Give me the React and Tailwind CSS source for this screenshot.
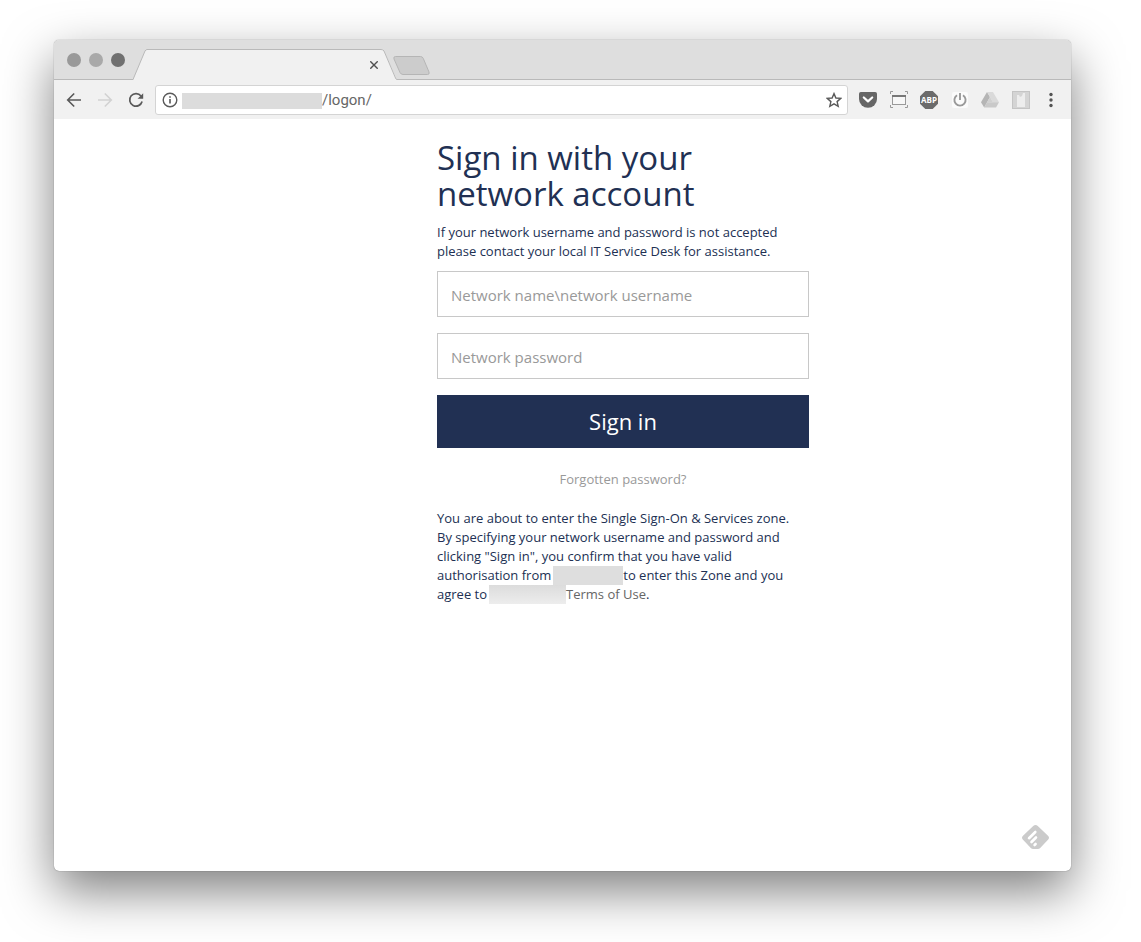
import React from "react";

const toolButton = "flex h-5 w-5 shrink-0 items-center justify-center";

function TabStrip() {
  return (
    <div className="flex h-10 items-end border-b border-[#b9b9b9] bg-[#dedede]">
      <div className="flex gap-2 self-center pl-[13px]">
        <button type="button" aria-label="Close window" className="h-3.5 w-3.5 rounded-full bg-[#999999]" />
        <button type="button" aria-label="Minimise window" className="h-3.5 w-3.5 rounded-full bg-[#a9a9a9]" />
        <button type="button" aria-label="Zoom window" className="h-3.5 w-3.5 rounded-full bg-[#707070]" />
      </div>
      <div className="-mb-px ml-2 flex h-[31px] w-[264px] items-stretch">
        <svg width="14" height="31" viewBox="0 0 14 31" aria-hidden="true" className="shrink-0">
          <path d="M0 31 L12 2 Q13 0 14 0 V31Z" fill="#f1f1f1" />
          <path d="M0 30.5 L12 2 Q13 .5 14 .5" fill="none" stroke="#b9b9b9" />
        </svg>
        <div className="flex flex-1 items-center justify-end border-t border-[#b9b9b9] bg-[#f1f1f1]">
          <button type="button" aria-label="Close tab" className="flex h-4 w-3.5 items-center justify-center">
            <svg width="8" height="8" viewBox="0 0 8 8" aria-hidden="true">
              <path d="M.3 .3 7.7 7.7M7.7 .3 .3 7.7" stroke="#505050" strokeWidth="1.4" />
            </svg>
          </button>
        </div>
        <svg width="16" height="31" viewBox="0 0 16 31" aria-hidden="true" className="shrink-0">
          <path d="M0 0 Q2 0 3 2 L15 29 Q16 31 16 31 H0Z" fill="#f1f1f1" />
          <path d="M0 .5 Q2 .5 3 2 L14.5 29 Q15 30.5 16 30.5" fill="none" stroke="#b9b9b9" />
        </svg>
      </div>
      <button type="button" aria-label="New tab" className="mb-1 -ml-1">
        <svg width="37" height="19" viewBox="0 0 37 19" aria-hidden="true">
          <path d="M2.5 .5 H27.5 Q29.5 .5 30.3 2.5 L36 16 Q36.8 18.5 34.5 18.5 H10 Q8 18.5 7 16.5 L1 3 Q.2 .5 2.5 .5Z" fill="#cccccc" stroke="#b5b5b5" />
        </svg>
      </button>
    </div>
  );
}

function Toolbar() {
  return (
    <div className="flex h-[39px] items-center bg-[#f1f1f1] px-[10px]">
      <div className="flex gap-[11px]">
        <button type="button" aria-label="Back" className={toolButton}>
          <svg width="16" height="16" viewBox="0 0 16 16" fill="none" stroke="#5a5a5a" strokeWidth="1.6" aria-hidden="true">
            <path d="M15 8H2M8.2 1.5 1.7 8l6.5 6.5" />
          </svg>
        </button>
        <button type="button" aria-label="Forward" className={toolButton}>
          <svg width="16" height="16" viewBox="0 0 16 16" fill="none" stroke="#d2d2d2" strokeWidth="1.6" aria-hidden="true">
            <path d="M1 8h13M7.8 1.5 14.3 8l-6.5 6.5" />
          </svg>
        </button>
        <button type="button" aria-label="Reload" className={toolButton}>
          <svg width="16" height="16" viewBox="0 0 16 16" aria-hidden="true">
            <path d="M13 4 A6.3 6.3 0 1 0 14.1 9.5" fill="none" stroke="#5a5a5a" strokeWidth="1.7" />
            <path d="M15.2 1.2 V6.8 H9.6Z" fill="#5a5a5a" />
          </svg>
        </button>
      </div>
      <div className="ml-[9px] flex h-[30px] flex-1 items-center rounded-[3px] border border-[#d4d4d4] bg-white pl-[6px] pr-[3px]">
        <svg width="16" height="16" viewBox="0 0 16 16" className="shrink-0" aria-hidden="true">
          <circle cx="8" cy="8" r="6.8" fill="none" stroke="#5a5a5a" strokeWidth="1.4" />
          <path d="M8 7v4.6M8 4.2v1.6" stroke="#555555" strokeWidth="1.6" />
        </svg>
        <span className="ml-1 mt-0.5 h-4 w-[140px] shrink-0 bg-[#dcdcdc]" />
        <input
          aria-label="Address"
          defaultValue="/logon/"
          className="min-w-0 flex-1 bg-transparent font-['Roboto',sans-serif] text-[15px] leading-5 text-[#666666] outline-none"
        />
        <button type="button" aria-label="Bookmark this page" className={toolButton}>
          <svg width="16" height="16" viewBox="0 0 16 16" aria-hidden="true">
            <path d="M8 1.6 9.9 6 14.8 6.4 11.1 9.6 12.2 14.3 8 11.8 3.8 14.3 4.9 9.6 1.2 6.4 6.1 6Z" fill="none" stroke="#5a5a5a" strokeWidth="1.4" />
          </svg>
        </button>
      </div>
      <div className="ml-[10px] flex w-[203px] shrink-0 justify-between">
        <button type="button" aria-label="Pocket" className={toolButton}>
          <svg width="18" height="16" viewBox="0 0 18 16" aria-hidden="true">
            <path d="M1.8 0H16.2Q18 0 18 1.8V7A9 8.8 0 0 1 0 7V1.8Q0 0 1.8 0Z" fill="#666666" />
            <path d="M4.8 5.5 9 9.4 13.2 5.5" fill="none" stroke="#fff" strokeWidth="2.2" strokeLinecap="round" strokeLinejoin="round" />
          </svg>
        </button>
        <button type="button" aria-label="Screen capture" className={toolButton}>
          <svg width="18" height="17" viewBox="0 0 18 17" fill="none" aria-hidden="true">
            <path d="M.5 3V.5H3M15 .5h2.5V3M17.5 14v2.5H15M3 16.5H.5V14" stroke="#999999" />
            <rect x="2.5" y="4.5" width="13" height="9" fill="#f7f7f7" stroke="#999999" />
            <path d="M2 5h14" stroke="#777777" strokeWidth="2" />
          </svg>
        </button>
        <button type="button" aria-label="Ad blocker" className={toolButton}>
          <svg width="18" height="18" viewBox="0 0 18 18" aria-hidden="true">
            <path d="M5.3 0h7.4L18 5.3v7.4L12.7 18H5.3L0 12.7V5.3Z" fill="#6b6b6b" />
            <text x="9" y="12" textAnchor="middle" fontFamily="Open Sans, sans-serif" fontWeight="700" fontSize="8" fill="#fff">ABP</text>
          </svg>
        </button>
        <button type="button" aria-label="Power" className={toolButton}>
          <svg width="18" height="18" viewBox="0 0 18 18" aria-hidden="true">
            <rect x="1" y="1" width="16" height="16" rx="2" fill="#fbfbfb" />
            <path d="M6 4.3a5.6 5.6 0 1 0 6 0M9 2V9" fill="none" stroke="#999999" strokeWidth="1.9" />
          </svg>
        </button>
        <button type="button" aria-label="Drive" className={toolButton}>
          <svg width="18" height="16" viewBox="0 0 18 16" aria-hidden="true">
            <path d="M6 0 9 5 3.2 15.5 0 10.3Z" fill="#b5b5b5" />
            <path d="M6 0h6l6 10.3h-6Z" fill="#dadada" />
            <path d="M6 10.3h12l-3 5.2H3.2Z" fill="#c9c9c9" />
            <path d="M9 5 12 10.3H6Z" fill="#d0d0d0" />
          </svg>
        </button>
        <button type="button" aria-label="Extension" className={toolButton}>
          <svg width="18" height="18" viewBox="0 0 18 18" aria-hidden="true">
            <rect x=".5" y=".5" width="17" height="17" fill="#d4d4d4" stroke="#c4c4c4" />
            <path d="M5 4h2l1 2 2-1 1-3h2v14H5Z" fill="#ededed" />
          </svg>
        </button>
        <button type="button" aria-label="Menu" className={toolButton}>
          <svg width="4" height="16" viewBox="0 0 4 16" fill="#555555" aria-hidden="true">
            <circle cx="2" cy="2.5" r="1.7" />
            <circle cx="2" cy="8" r="1.7" />
            <circle cx="2" cy="13.5" r="1.7" />
          </svg>
        </button>
      </div>
    </div>
  );
}

const fieldClass =
  "h-[46px] w-full border border-[#c8c8c8] bg-white px-[13px] pt-0.5 text-[15px] text-[#213053] outline-none placeholder:text-[#999999]";

function SignIn() {
  return (
    <form onSubmit={(e) => e.preventDefault()} className="w-full max-w-[372px] text-[13px] leading-[19px] text-[#213053]">
      <h1 className="max-w-[300px] text-[33px] leading-9">Sign in with your network account</h1>
      <p className="mt-[11px]">
        If your network username and password is not accepted please contact your local IT Service Desk for assistance.
      </p>
      <div className="mt-2.5 flex flex-col gap-4">
        <input type="text" aria-label="Network name and username" placeholder="Network name\network username" className={fieldClass} />
        <input type="password" aria-label="Network password" placeholder="Network password" className={fieldClass} />
        <button type="submit" className="h-[53px] w-full bg-[#213053] text-[22px] text-white">
          Sign in
        </button>
      </div>
      <p className="mt-[22px] text-center">
        <a href="#forgotten" className="text-[#999999]">Forgotten password?</a>
      </p>
      <p className="mt-5 max-w-[360px]">
        You are about to enter the Single Sign-On &amp; Services zone. By specifying your network username and password and
        clicking "Sign in", you confirm that you have valid authorisation from
        <span className="ml-0.5 inline-block h-[19px] w-[70px] bg-[#dedede] align-top" />
        to enter this Zone and you agree to
        <span className="ml-0.5 inline-block h-[19px] w-[77px] bg-linear-to-b from-[#dcdcdc] to-[#ededed] align-top" />
        <a href="#terms" className="text-[#666666]">Terms of Use</a>.
      </p>
    </form>
  );
}

export default function App() {
  return (
    <div className="flex min-h-screen flex-col bg-white pt-10 pr-[70px] pb-[71px] pl-[54px] font-['Open_Sans',sans-serif]">
      <div className="flex flex-1 flex-col overflow-hidden rounded-[5px] bg-white shadow-[0_0_1px_rgba(0,0,0,0.6),0_20px_50px_rgba(0,0,0,0.5)]">
        <TabStrip />
        <Toolbar />
        <main className="flex flex-1 flex-col justify-between">
          <div className="pt-[21px] pr-4 pl-[383px]">
            <SignIn />
          </div>
          <button type="button" aria-label="Add to Feedly" className="mr-[22px] mb-[22px] self-end">
            <svg width="27" height="24" viewBox="0 0 27 24" aria-hidden="true">
              <path d="M11.2 1 Q13.5-1 15.8 1 L26 10.8 Q28 12.8 26 14.8 L18.2 23 Q17.3 24 15.8 24 H11.2 Q9.7 24 8.8 23 L1 14.8 Q-1 12.8 1 10.8Z" fill="#cbcbcb" />
              <g stroke="#fff" strokeWidth="2.6" strokeLinecap="round">
                <path d="M7 13.2 13.3 7M9.5 17 14 12.5M12.6 20 13.6 19" />
              </g>
            </svg>
          </button>
        </main>
      </div>
    </div>
  );
}
